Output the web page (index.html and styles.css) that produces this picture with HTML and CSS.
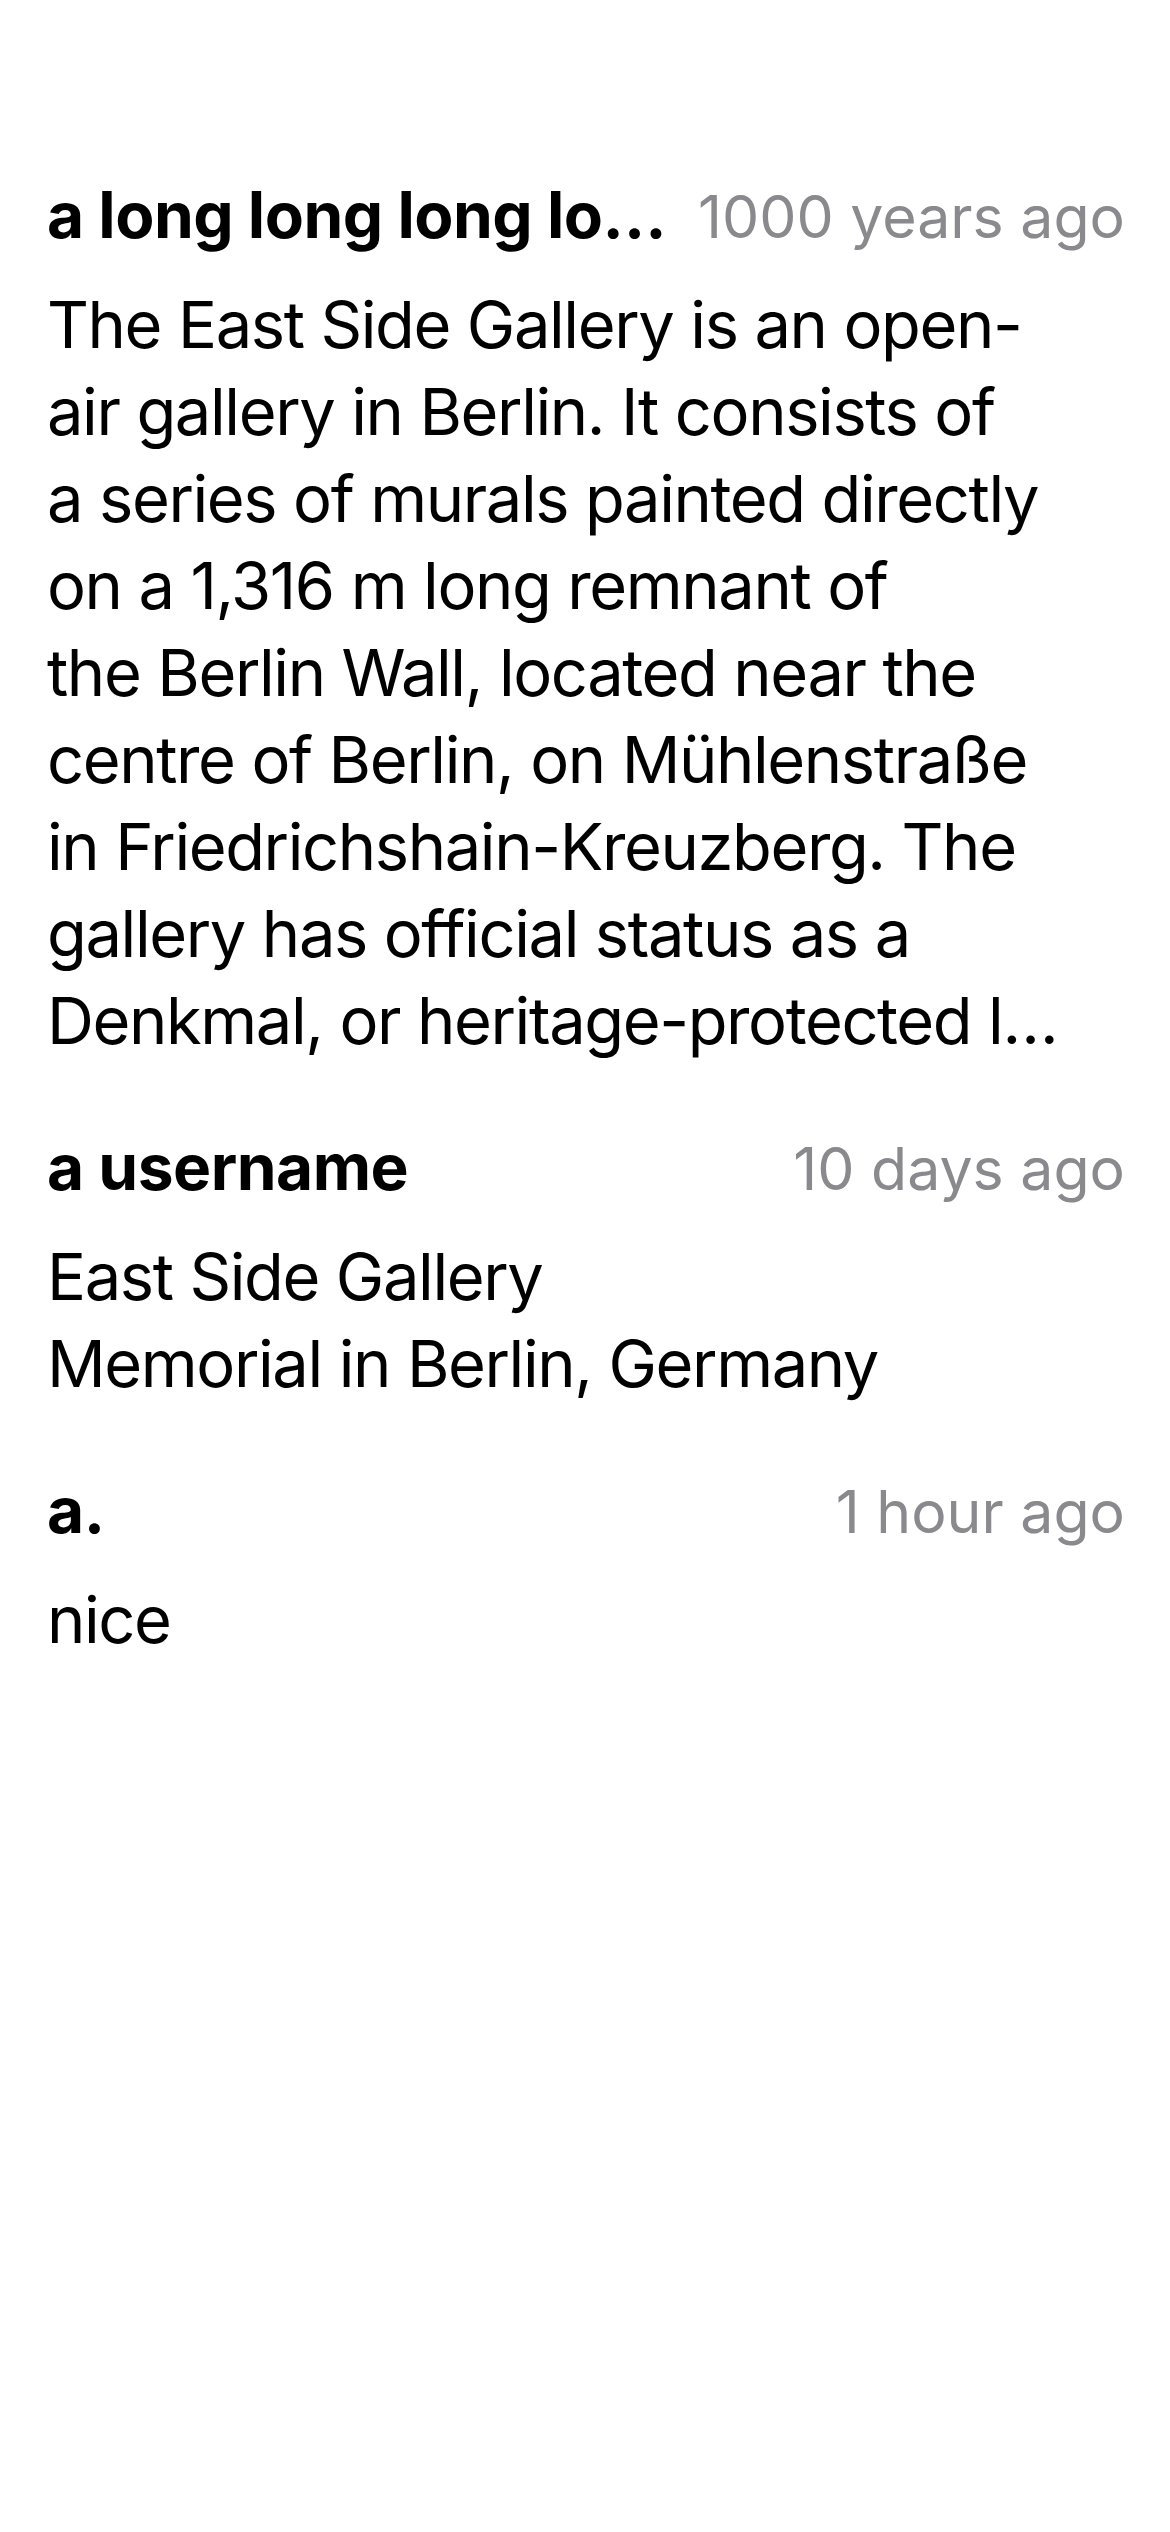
FILE: index.html
```html
<!DOCTYPE html>
<html lang="en">
<head>
<meta charset="utf-8">
<title>Comments</title>
<link rel="stylesheet" href="styles.css">
</head>
<body>
<main class="list">
  <article class="item">
    <header class="item-head">
      <span class="name">a long long long long long long long long name</span>
      <span class="time">1000 years ago</span>
    </header>
    <p class="body">The East Side Gallery is an open-<br>air gallery in Berlin. It consists of<br>a series of murals painted directly<br>on a 1,316 m long remnant of<br>the Berlin Wall, located near the<br>centre of Berlin, on Mühlenstraße<br>in Friedrichshain-Kreuzberg. The<br>gallery has official status as a<br>Denkmal, or heritage-protected l…</p>
  </article>
  <article class="item">
    <header class="item-head">
      <span class="name">a username</span>
      <span class="time">10 days ago</span>
    </header>
    <p class="body">East Side Gallery<br>Memorial in Berlin, Germany</p>
  </article>
  <article class="item">
    <header class="item-head">
      <span class="name">a.</span>
      <span class="time">1 hour ago</span>
    </header>
    <p class="body">nice</p>
  </article>
</main>
</body>
</html>
```
FILE: styles.css
```css
html, body {
  margin: 0;
  padding: 0;
  background: #ffffff;
}

body {
  font-family: Inter, "Noto Sans", "Liberation Sans", sans-serif;
  color: #000000;
  width: 1170px;
  min-height: 2532px;
}

.list {
  display: flex;
  flex-direction: column;
  gap: 59px;
  padding: 171px 45px 0 47px;
}

.item {
  display: flex;
  flex-direction: column;
  gap: 21px;
}

.item-head {
  display: flex;
  align-items: baseline;
  gap: 20px;
  line-height: 87px;
}

.name {
  flex: 1 1 auto;
  min-width: 0;
  font-size: 64px;
  font-weight: 700;
  letter-spacing: -0.5px;
  white-space: nowrap;
  overflow: hidden;
  text-overflow: ellipsis;
}

.time {
  flex: 0 0 auto;
  font-size: 59px;
  font-weight: 400;
  color: #8a8a8e;
  letter-spacing: 0;
}

.body {
  margin: 0;
  font-size: 65px;
  line-height: 87px;
  font-weight: 400;
  letter-spacing: -1.4px;
}
```
